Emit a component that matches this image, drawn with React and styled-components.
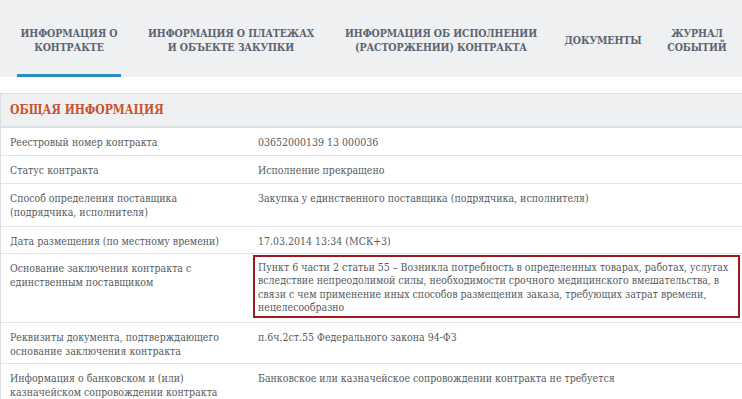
import React from "react";
import styled, { createGlobalStyle } from "styled-components";

const Global = createGlobalStyle`
  html, body { margin: 0; padding: 0; background: #fff; }
  body { font-family: "DejaVu Serif", serif; font-stretch: condensed; }
`;

const Page = styled.div`
  width: 742px;
  height: 399px;
  overflow: hidden;
  background: #fff;
`;

const TabBar = styled.nav`
  display: flex;
  align-items: stretch;
  height: 77px;
  background: #eef0f2;
  padding-left: 17px;
`;

const Tab = styled.div`
  width: ${(p) => p.$w}px;
  margin-right: ${(p) => p.$mr || 0}px;
  display: flex;
  align-items: center;
  justify-content: center;
  text-align: center;
  white-space: nowrap;
  font-weight: bold;
  font-size: 10.5px;
  letter-spacing: -0.1px;
  line-height: 14px;
  color: #5c6571;
  text-transform: uppercase;
  box-sizing: border-box;
  padding-top: 5px;
  border-bottom: 3px solid ${(p) => (p.$active ? "#2a8cc0" : "transparent")};
`;

const Gap = styled.div`
  height: 16px;
`;

const Section = styled.section`
  border-top: 1px solid #dcdfe2;
  border-left: 1px solid #dcdfe2;
`;

const SectionHeader = styled.h2`
  margin: 0;
  height: 32px;
  display: flex;
  align-items: center;
  padding-left: 9px;
  background: #eef0f2;
  border-bottom: 2px solid #dcdfe2;
  color: #c8532c;
  font-size: 12px;
  font-weight: bold;
  text-transform: uppercase;
`;

const Row = styled.div`
  display: grid;
  grid-template-columns: 257px 1fr;
  border-bottom: 1px solid #e2e4e6;
  min-height: ${(p) => p.$h}px;
  box-sizing: border-box;
  padding: ${(p) => (p.$boxed ? "1px 2px 4px 0" : "7px 0 5px")};
  font-size: 10.5px;
  line-height: 14px;
  color: #555b61;
`;

const Label = styled.div`
  padding-left: 9px;
  padding-top: ${(p) => (p.$boxed ? "6px" : "0")};
`;

const Value = styled.div``;

const Highlight = styled.div`
  margin-left: -5px;
  border: 2px solid #9b1b1e;
  padding: 4px 4px 2px 3px;
  line-height: 13.25px;
`;

const rows = [
  { l: "Реестровый номер контракта", v: "03652000139 13 000036", h: 28 },
  { l: "Статус контракта", v: "Исполнение прекращено", h: 28 },
  {
    l: (<>Способ определения поставщика<br />(подрядчика, исполнителя)</>),
    v: "Закупка у единственного поставщика (подрядчика, исполнителя)",
    h: 43,
  },
  { l: "Дата размещения (по местному времени)", v: "17.03.2014 13:34 (МСК+3)", h: 27 },
  {
    l: (<>Основание заключения контракта с<br />единственным поставщиком</>),
    v: "Пункт 6 части 2 статьи 55 – Возникла потребность в определенных товарах, работах, услугах вследствие непреодолимой силы, необходимости срочного медицинского вмешательства, в связи с чем применение иных способов размещения заказа, требующих затрат времени, нецелесообразно",
    h: 69,
    boxed: true,
  },
  {
    l: (<>Реквизиты документа, подтверждающего<br />основание заключения контракта</>),
    v: "п.6ч.2ст.55 Федерального закона 94-ФЗ",
    h: 41,
  },
  {
    l: (<>Информация о банковском и (или)<br />казначейском сопровождении контракта</>),
    v: "Банковское или казначейское сопровождении контракта не требуется",
    h: 41,
  },
];

export default function App() {
  return (
    <Page>
      <Global />
      <TabBar>
        <Tab $w={104} $mr={20} $active>Информация о<br />контракте</Tab>
        <Tab $w={180} $mr={26}>Информация о платежах<br />и объекте закупки</Tab>
        <Tab $w={188} $mr={26}>Информация об исполнении<br />(расторжении) контракта</Tab>
        <Tab $w={84} $mr={17}>Документы</Tab>
        <Tab $w={70}>Журнал<br />событий</Tab>
      </TabBar>
      <Gap />
      <Section>
        <SectionHeader>Общая информация</SectionHeader>
        {rows.map((r, i) => (
          <Row key={i} $h={r.h} $boxed={r.boxed}>
            <Label $boxed={r.boxed}>{r.l}</Label>
            {r.boxed ? <Highlight>{r.v}</Highlight> : <Value>{r.v}</Value>}
          </Row>
        ))}
      </Section>
    </Page>
  );
}
